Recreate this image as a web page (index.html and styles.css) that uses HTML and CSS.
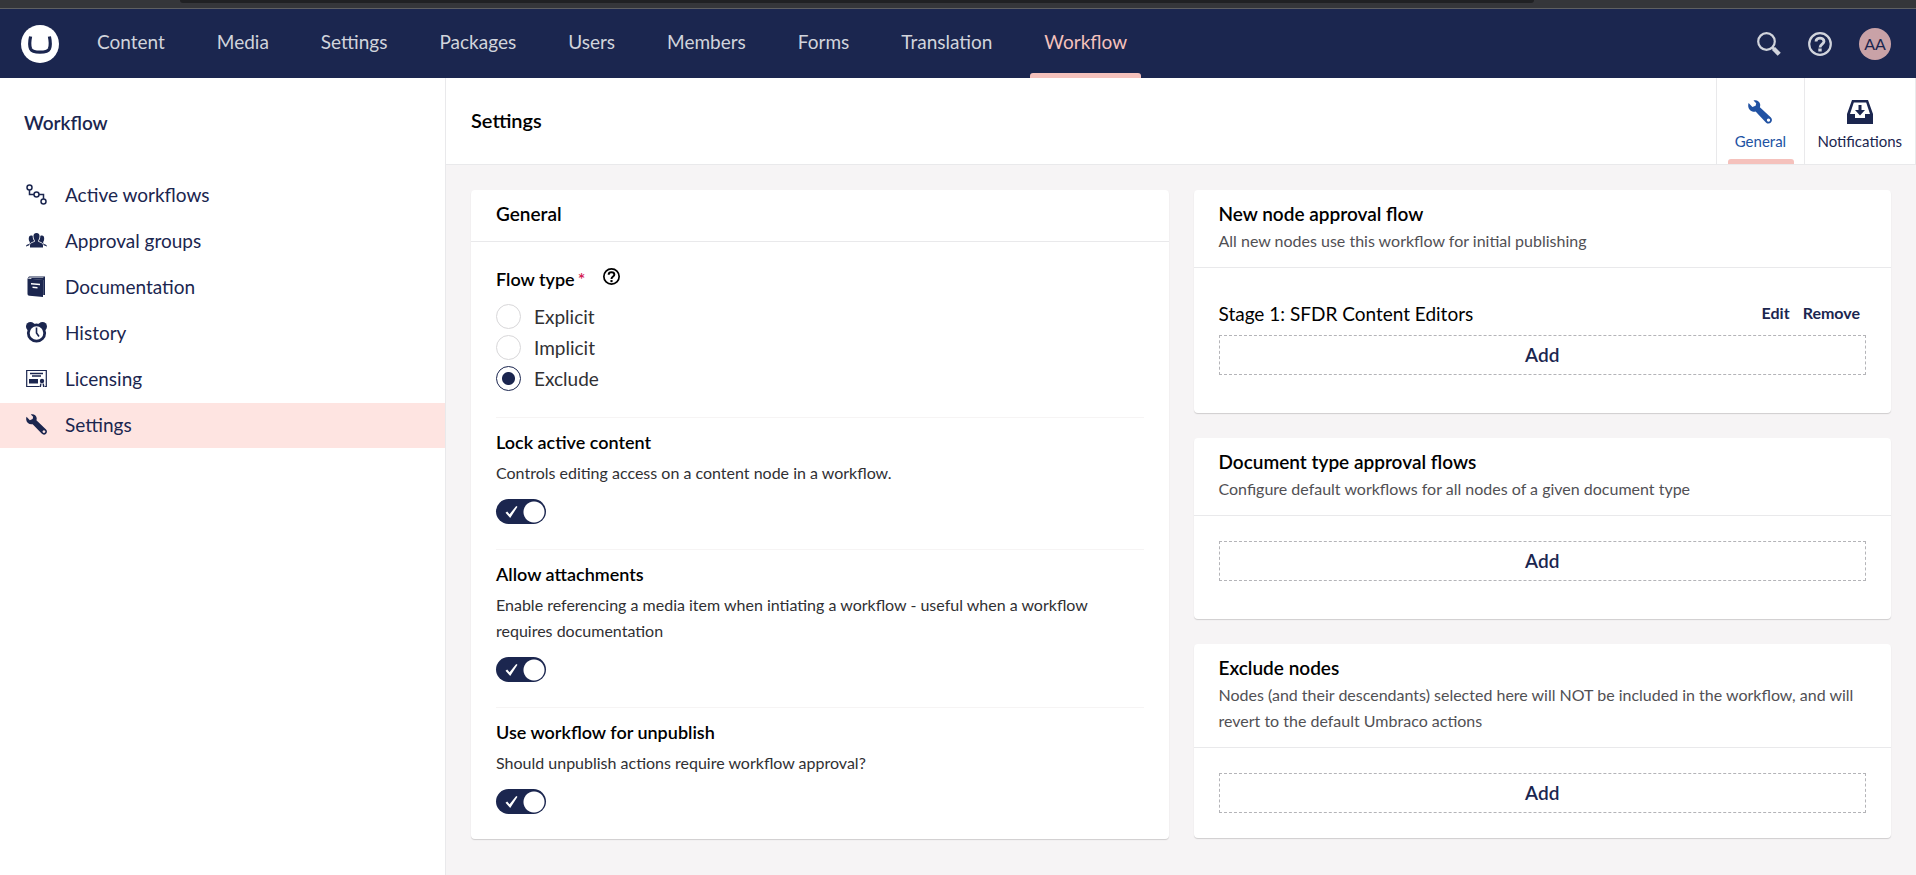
FILE: index.html
```html
<!DOCTYPE html>
<html lang="en">
<head>
    <meta charset="UTF-8">
    <meta name="viewport" content="width=device-width, initial-scale=1.0">
    <title>Settings - Umbraco</title>
    <link rel="stylesheet" href="styles.css">
</head>
<body>
    <div class="browser-edge"><div class="browser-tab"></div></div>

    <header class="app-header">
        <a class="logo" href="#" aria-label="Umbraco">
            <svg width="38" height="38" viewBox="0 0 38 38">
                <circle cx="19" cy="19" r="19" fill="#fff"/>
                <path d="M9.600 11.500C8.600 16 8.200 20.500 9.600 23.800c1.300 2.800 4.500 3.400 9.400 3.400s8.100-.6 9.400-3.400c1.400-3.300 1-7.800 0-12.300" fill="none" stroke="#1b264f" stroke-width="3.200"/>
            </svg>
        </a>
        <nav class="sections">
            <a href="#">Content</a>
            <a href="#">Media</a>
            <a href="#">Settings</a>
            <a href="#">Packages</a>
            <a href="#">Users</a>
            <a href="#">Members</a>
            <a href="#">Forms</a>
            <a href="#">Translation</a>
            <a href="#" class="current">Workflow</a>
        </nav>
        <div class="header-actions">
            <button type="button" aria-label="Search">
                <svg width="24" height="24" viewBox="0 0 24 24" fill="none" stroke="currentColor">
                    <circle cx="9.500" cy="9.500" r="8.300" stroke-width="2.200"/>
                    <path d="M15 15l2 2" stroke-width="2.500"/>
                    <path d="M16.500 16.500l5.700 5.700" stroke-width="4.400"/>
                </svg>
            </button>
            <button type="button" aria-label="Help">
                <svg width="24" height="24" viewBox="0 0 24 24" fill="none" stroke="currentColor">
                    <circle cx="12" cy="12" r="10.800" stroke-width="2.200"/>
                    <path d="M8 9.500C8 5 16 5 16 9.500c0 2.500-4 2.800-4 6" stroke-width="2.800"/>
                    <path d="M12 16.500v3" stroke-width="3.400"/>
                </svg>
            </button>
            <button type="button" class="avatar">AA</button>
        </div>
    </header>

    <div class="layout">
        <aside class="sidebar">
            <h2>Workflow</h2>
            <ul>
                <li><a href="#">
                    <svg viewBox="0 0 21 21" fill="none" stroke="currentColor" stroke-width="1.500">
                        <circle cx="3.500" cy="3.500" r="2.500"/><circle cx="10.500" cy="10.500" r="2.500"/><circle cx="17.500" cy="17.500" r="2.500"/>
                        <path d="M3.500 6v4.500H8M13 10.500h4.500V15"/>
                    </svg>
                    Active workflows</a></li>
                <li><a href="#">
                    <svg viewBox="0 0 21 21" fill="currentColor">
                        <path d="M10.500 3c2.200 0 3.200 1.500 3 3.500-.1 1.800-.6 3-1.200 3.700v1.600c1 .9 4.700 1 4.700 3.500V17.500H4v-2.200c0-2.500 3.700-2.600 4.700-3.500v-1.600C8.100 9.500 7.600 8.300 7.500 6.500 7.300 4.500 8.300 3 10.500 3z"/>
                        <path d="M5 5.500c.8 0 1.400.1 1.700.4 0 2 .5 3.500 1.300 4.600v.7c-1.300.8-4.200 1-4.700 4L0 16.500c0-2.300 3-2.400 3.800-3.100v-1.300C2.500 10.500 2 5.500 5 5.500zM16 5.500c-.8 0-1.400.1-1.700.4 0 2-.5 3.500-1.300 4.600v.7c1.300.8 4.200 1 4.700 4l3.300 1.300c0-2.300-3-2.400-3.800-3.100v-1.300c1.300-1.600 1.800-6.600-1.200-6.600z"/>
                    </svg>
                    Approval groups</a></li>
                <li><a href="#">
                    <svg viewBox="0 0 21 21" fill="currentColor">
                        <path d="M1.500 2.500L3 .5h16V19h-1.800V4l-12-.8L5.400 2h12V1.600L3.500 1.500z"/>
                        <path fill-rule="evenodd" d="M1.500 2.500L17 4v17l-13.500-1.200c-1.300-.1-2-.8-2-2zM5 7v1.500l9 .8V7.800zM6.500 10.500V12l5 .5V11z"/>
                    </svg>
                    Documentation</a></li>
                <li><a href="#">
                    <svg viewBox="0 0 21 21">
                        <circle cx="4.500" cy="4.500" r="4.500" fill="currentColor"/><circle cx="16.500" cy="4.500" r="4.500" fill="currentColor"/>
                        <circle cx="10.500" cy="11" r="8.200" fill="#fff" stroke="currentColor" stroke-width="2.800"/>
                        <path d="M10.500 5.500V11l2.500 3.500" fill="none" stroke="currentColor" stroke-width="1.600"/>
                    </svg>
                    History</a></li>
                <li><a href="#">
                    <svg viewBox="0 0 21 21">
                        <path d="M13.500 18.500H.7V2.500h19.600v16h-1.500" fill="none" stroke="currentColor" stroke-width="1.200"/>
                        <path d="M4 5.500h13M6 8h9" stroke="currentColor" stroke-width="1.300"/>
                        <path d="M3 11h9v4.500H3z" fill="currentColor"/>
                        <circle cx="16" cy="13" r="2.200" fill="currentColor"/><path d="M14.300 15.500h1.300L15 19h-1.500zM16.500 15.500h1.300l.8 3.500H17z" fill="currentColor"/>
                    </svg>
                    Licensing</a></li>
                <li class="active"><a href="#">
                    <svg viewBox="0 0 24 24" fill="currentColor">
                        <path fill-rule="evenodd" d="M5.500.500c3-1 6.300.8 6.700 4 .1 1-.1 1.800-.3 2.700l11 10.400c1.500 1.500 1.300 3.700 0 5-1.400 1.400-3.600 1.300-5-.2L7.600 11.600C4 12.500.8 10 .3 6.800.1 5.500.2 4.200.6 3l3.800 4 3.200-1.200.6-2.600zM20.500 18.500a1.600 1.600 0 1 0 .01 0z"/>
                    </svg>
                    Settings</a></li>
            </ul>
        </aside>

        <main class="editor">
            <div class="editor-header">
                <h1>Settings</h1>
                <div class="tabs">
                    <button type="button" class="tab selected">
                        <svg viewBox="0 0 24 24" fill="currentColor">
                            <path fill-rule="evenodd" d="M5.500.500c3-1 6.300.8 6.700 4 .1 1-.1 1.800-.3 2.700l11 10.400c1.500 1.500 1.300 3.700 0 5-1.400 1.400-3.600 1.300-5-.2L7.600 11.600C4 12.500.8 10 .3 6.800.1 5.500.2 4.200.6 3l3.800 4 3.200-1.200.6-2.600zM20.500 18.500a1.600 1.600 0 1 0 .01 0z"/>
                        </svg>
                        General
                    </button>
                    <button type="button" class="tab">
                        <svg class="wide" viewBox="0 0 26 24" fill="currentColor">
                            <path fill-rule="evenodd" d="M5 0h16l5 14v10H0V14zM6.800 2.500L3 14h5v4h10v-4h5L19.200 2.500z"/>
                            <path d="M11.500 5h3v5H18l-5 5.500L8 10h3.500z"/>
                        </svg>
                        Notifications
                    </button>
                </div>
            </div>

            <div class="editor-body">
                <section class="card">
                    <div class="card-header">
                        <h3>General</h3>
                    </div>
                    <fieldset class="flow-type">
                        <legend>Flow type <span class="required">*</span>
                            <svg width="17" height="17" viewBox="0 0 24 24" fill="none" stroke="currentColor">
                                <circle cx="12" cy="12" r="10.800" stroke-width="2.400"/>
                                <path d="M8 9.500C8 5 16 5 16 9.500c0 2.500-4 2.800-4 6" stroke-width="2.800"/>
                                <path d="M12 17v3" stroke-width="3"/>
                            </svg>
                        </legend>
                        <label><input type="radio" name="flow" value="explicit">Explicit</label>
                        <label><input type="radio" name="flow" value="implicit">Implicit</label>
                        <label><input type="radio" name="flow" value="exclude" checked>Exclude</label>
                    </fieldset>
                    <div class="property">
                        <label for="lock">Lock active content</label>
                        <p>Controls editing access on a content node in a workflow.</p>
                        <span class="toggle">
                            <input type="checkbox" id="lock" checked>
                            <svg viewBox="0 0 14 14"><path d="M0 8l2-1.500 2.700 3L12.500 0 14 .8 5.500 14z" fill="#fff"/></svg>
                        </span>
                    </div>
                    <div class="property">
                        <label for="attachments">Allow attachments</label>
                        <p>Enable referencing a media item when intiating a workflow - useful when a workflow requires documentation</p>
                        <span class="toggle">
                            <input type="checkbox" id="attachments" checked>
                            <svg viewBox="0 0 14 14"><path d="M0 8l2-1.500 2.700 3L12.500 0 14 .8 5.500 14z" fill="#fff"/></svg>
                        </span>
                    </div>
                    <div class="property">
                        <label for="unpublish">Use workflow for unpublish</label>
                        <p>Should unpublish actions require workflow approval?</p>
                        <span class="toggle">
                            <input type="checkbox" id="unpublish" checked>
                            <svg viewBox="0 0 14 14"><path d="M0 8l2-1.500 2.700 3L12.500 0 14 .8 5.500 14z" fill="#fff"/></svg>
                        </span>
                    </div>
                </section>

                <div class="column">
                    <section class="card">
                        <div class="card-header">
                            <h3>New node approval flow</h3>
                            <p>All new nodes use this workflow for initial publishing</p>
                        </div>
                        <div class="card-body roomy">
                            <div class="stage">
                                <span>Stage 1: SFDR Content Editors</span>
                                <div class="stage-actions">
                                    <button type="button">Edit</button>
                                    <button type="button">Remove</button>
                                </div>
                            </div>
                            <button type="button" class="add">Add</button>
                        </div>
                    </section>
                    <section class="card">
                        <div class="card-header">
                            <h3>Document type approval flows</h3>
                            <p>Configure default workflows for all nodes of a given document type</p>
                        </div>
                        <div class="card-body roomy">
                            <button type="button" class="add">Add</button>
                        </div>
                    </section>
                    <section class="card">
                        <div class="card-header">
                            <h3>Exclude nodes</h3>
                            <p>Nodes (and their descendants) selected here will NOT be included in the workflow, and will revert to the default Umbraco actions</p>
                        </div>
                        <div class="card-body">
                            <button type="button" class="add">Add</button>
                        </div>
                    </section>
                </div>
            </div>
        </main>
    </div>
</body>
</html>
```
FILE: styles.css
```css
* {
    box-sizing: border-box;
}
html, body {
    height: 100%;
}
body {
    margin: 0;
    display: flex;
    flex-direction: column;
    font-family: Lato, "Liberation Sans", sans-serif;
    font-size: 19px;
    line-height: 26px;
    color: #000;
    background: #f6f4f5;
}
h1, h2, h3, p, ul {
    margin: 0;
    padding: 0;
}
h1, h2, h3 {
    font-size: 19px;
    font-weight: 600;
}
button {
    font-family: inherit;
    border: 0;
    padding: 0;
    background: none;
    cursor: pointer;
}
a {
    color: inherit;
    text-decoration: none;
}
ul {
    list-style: none;
}
svg {
    display: block;
    flex: none;
}

/* browser frame */
.browser-edge {
    flex: none;
    height: 9px;
    padding: 0 382px 0 180px;
    background: #35363a;
    border-bottom: 1px solid #5f6062;
}
.browser-tab {
    height: 3px;
    background: #202124;
    border-radius: 0 0 8px 8px;
}

/* top bar */
.app-header {
    flex: none;
    display: flex;
    align-items: center;
    height: 69px;
    padding: 0 25px 0 21px;
    background: #1b264f;
}
.sections {
    display: flex;
    align-self: stretch;
    gap: 24px;
    margin-left: 24px;
}
.sections a {
    display: flex;
    align-items: center;
    padding: 0 14px 4px;
    color: #d1d4dc;
}
.sections .current {
    position: relative;
    color: #f5c1bc;
}
.sections .current::after {
    content: "";
    position: absolute;
    left: 0;
    right: 0;
    bottom: 0;
    height: 5px;
    background: #f5c1bc;
    border-radius: 3px 3px 0 0;
}
.header-actions {
    display: flex;
    align-items: center;
    gap: 27px;
    margin-left: auto;
    color: #d1d4dc;
}
.header-actions button {
    color: inherit;
}
.header-actions .avatar {
    width: 32px;
    height: 32px;
    border-radius: 50%;
    font-size: 16px;
    color: #1b264f;
    background: #c9a2a7;
}

.layout {
    flex: 1;
    display: flex;
}

/* tree */
.sidebar {
    flex: none;
    width: 446px;
    color: #1b264f;
    background: #fff;
    border-right: 1px solid #e9e9eb;
}
.sidebar h2 {
    padding: 32px 24px 37px;
}
.sidebar li {
    margin-bottom: 1px;
}
.sidebar li a {
    display: flex;
    align-items: center;
    gap: 18px;
    height: 45px;
    padding: 0 26px 2px;
}
.sidebar svg {
    width: 21px;
    height: 21px;
}
.sidebar .active {
    background: #fee4e1;
}

/* editor */
.editor {
    flex: 1;
}
.editor-header {
    display: flex;
    justify-content: space-between;
    align-items: center;
    height: 87px;
    padding-left: 25px;
    background: #fff;
    border-bottom: 1px solid #e9e9eb;
}
.editor-header h1 {
    padding-bottom: 2px;
    font-size: 20px;
}
.tabs {
    display: flex;
    align-self: stretch;
}
.tab {
    position: relative;
    display: flex;
    flex-direction: column;
    align-items: center;
    gap: 4px;
    min-width: 88px;
    padding: 22px 13px 0 12px;
    font-size: 15px;
    line-height: 26px;
    color: #1b264f;
    border-left: 1px solid #e9e9eb;
}
.tab:last-child {
    border-right: 1px solid #e9e9eb;
}
.tab svg {
    width: 24px;
    height: 24px;
}
.tab .wide {
    width: 26px;
}
.tab.selected {
    color: #2152a3;
}
.tab.selected::after {
    content: "";
    position: absolute;
    left: 11px;
    right: 10px;
    bottom: 0;
    height: 5px;
    background: #f5c1bc;
    border-radius: 3px 3px 0 0;
}
.editor-body {
    display: grid;
    grid-template-columns: 1fr 1fr;
    align-items: start;
    gap: 25px;
    padding: 25px;
}
.column {
    display: grid;
    gap: 25px;
}

/* cards */
.card {
    background: #fff;
    border-radius: 4px;
    box-shadow: 0 1px 1px rgba(0, 0, 0, 0.16);
}
.card-header {
    padding: 11px 25px 13px;
    border-bottom: 1px solid #e9e9eb;
}
.card-header h3 {
    padding-bottom: 1px;
}
.card-header p {
    font-size: 16px;
    color: #515054;
}
.card-body {
    padding: 25px;
}
.card-body.roomy {
    padding-bottom: 38px;
}
.flow-type {
    display: grid;
    gap: 6px;
    margin: 0;
    padding: 24px 25px 26px;
    border: 0;
}
.flow-type legend {
    float: left;
    display: flex;
    align-items: center;
    gap: 3px;
    padding: 0;
    margin-bottom: 6px;
    font-size: 18px;
    font-weight: 600;
}
.flow-type legend svg {
    margin: 0 0 6px 15px;
}
.required {
    color: #d42054;
}
.flow-type label {
    display: flex;
    align-items: center;
    gap: 13px;
    height: 25px;
    line-height: 24px;
    color: #303033;
}
.flow-type input {
    appearance: none;
    width: 25px;
    height: 25px;
    margin: 0;
    border: 1px solid #d8d7d9;
    border-radius: 50%;
}
.flow-type input:checked {
    border-color: #1b264f;
    background: radial-gradient(circle, #1b264f 6px, #fff 7px);
}
.property {
    margin: 0 25px;
    padding: 12px 0 25px;
    border-top: 1px solid #f6f4f4;
}
.property label {
    display: block;
    font-size: 18px;
    font-weight: 600;
    line-height: 24px;
}
.property p {
    margin: 6px 0 13px;
    font-size: 16px;
    color: #303033;
}
.toggle {
    position: relative;
    display: block;
    width: 50px;
    height: 25px;
}
.toggle input {
    appearance: none;
    display: block;
    width: 50px;
    height: 25px;
    margin: 0;
    border-radius: 13px;
    background: radial-gradient(circle at 38px 13px, #fff 10px, #1b264f 11px);
}
.toggle svg {
    position: absolute;
    left: 9px;
    top: 7px;
    width: 13px;
    height: 12px;
    pointer-events: none;
}
.stage {
    display: flex;
    justify-content: space-between;
    align-items: center;
    height: 42px;
    padding-right: 6px;
}
.stage-actions {
    display: flex;
    gap: 13px;
    padding-bottom: 4px;
}
.stage-actions button {
    font-size: 16px;
    font-weight: 700;
    color: #1b264f;
}
.add {
    display: block;
    width: 100%;
    height: 40px;
    padding-bottom: 2px;
    font-size: 19px;
    font-weight: 600;
    color: #1b264f;
    border: 1px dashed #b4b4b8;
}
```
